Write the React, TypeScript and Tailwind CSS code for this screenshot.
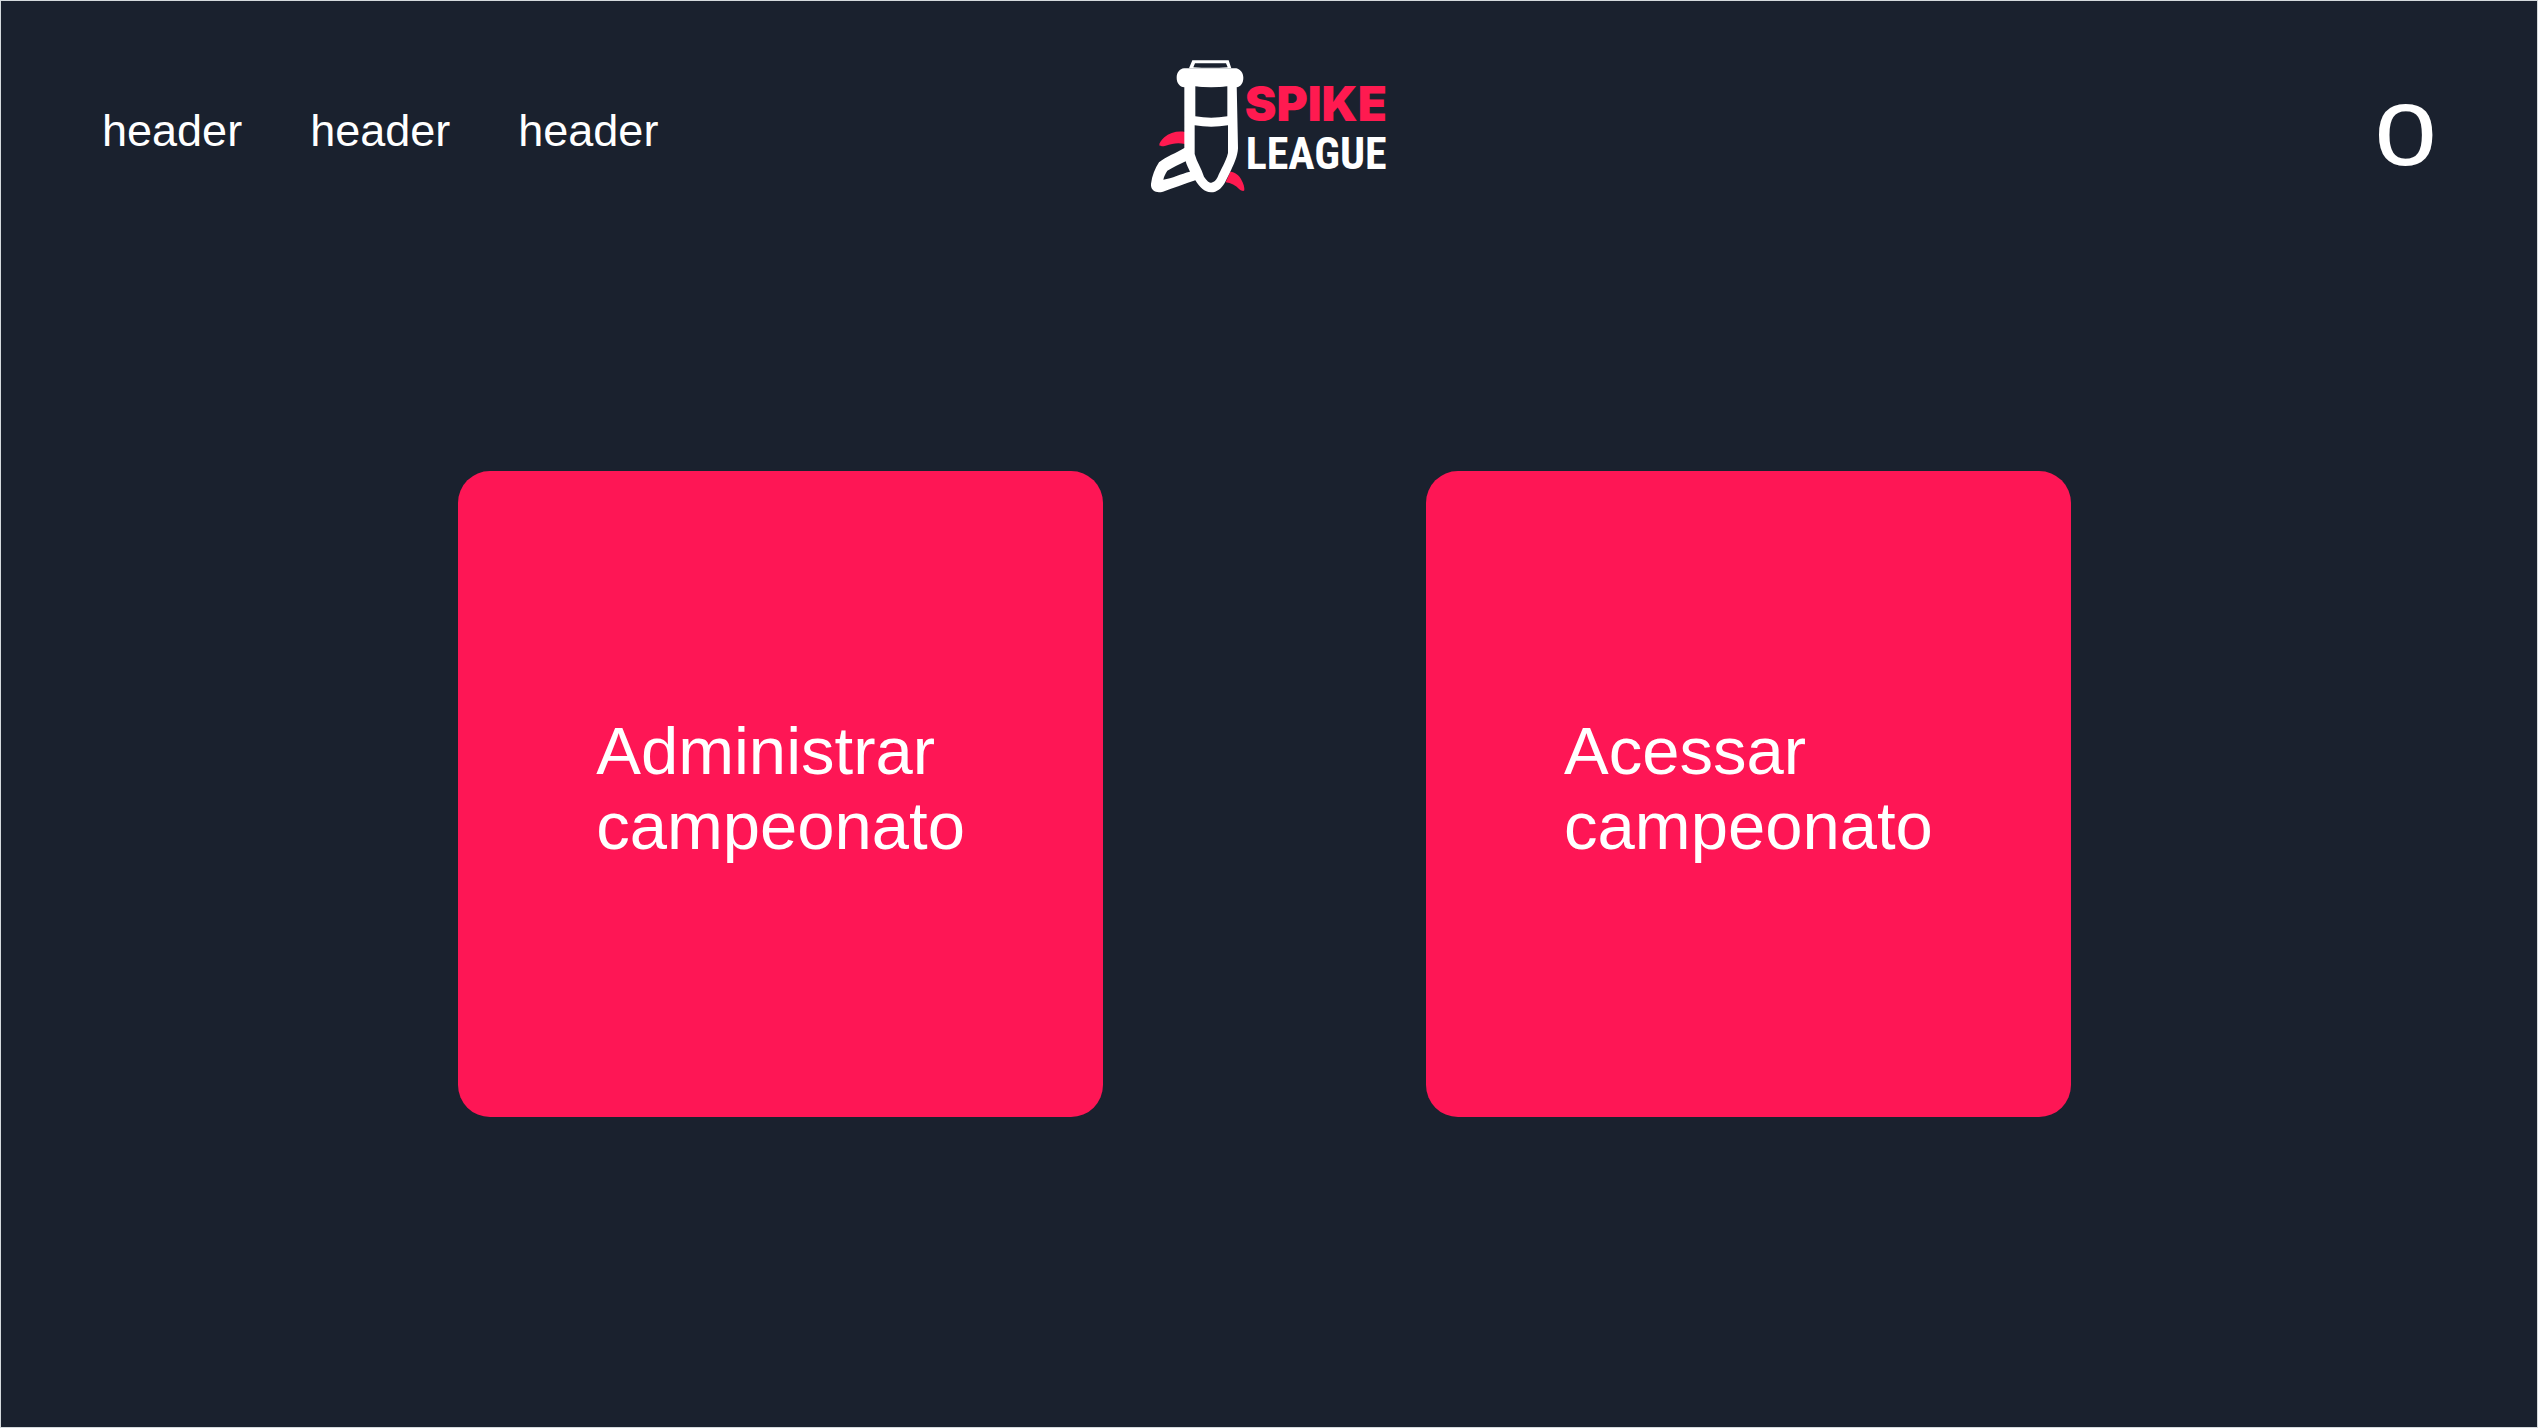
const links = [
  { id: 'first', label: 'header' },
  { id: 'second', label: 'header' },
  { id: 'third', label: 'header' },
];

const actions = [
  { id: 'manage', lines: ['Administrar', 'campeonato'] },
  { id: 'access', lines: ['Acessar', 'campeonato'] },
];

function Logo() {
  return (
    <svg viewBox="32 29 708 399" className="w-[236px] h-[133px]" role="img" aria-label="Spike League">
      {/* spikes behind the boot */}
      <g fill="#ff1a50">
        <path d="M134 245 C112 241 88 247 72 261 C62 270 56 279 57 285 C60 289 68 288 76 286 C96 279 114 276 134 281 Z" />
        <path d="M270 364 C284 365 296 374 303 388 C310 400 313 412 312 420 C310 424 303 422 297 417 C286 405 272 398 256 396 Z" />
      </g>
      <g fill="#fff">
        {/* pull tab and cuff */}
        <path
          fillRule="evenodd"
          d="M156 30 H265 L273 54 H146 Z M164 39 L159 51 Q210 54 262 51 L257 39 Z"
        />
        <path d="M131 54 H288 C300 57 309 68 309 82 C309 99 301 108 289 111 L261 108 Q212 114 164 108 L132 111 C118 109 109 98 109 82 C109 66 118 56 131 54 Z" />
        {/* shaft, foot and toe */}
        <path
          fillRule="evenodd"
          d="M132 100 H289 L293 294 C292 318 280 344 268 368 L253 398 C243 415 230 426 212 426 C192 426 178 410 165 390 C132 400 100 414 68 424 C46 430 30 420 32 400 C35 376 44 354 56 336 C78 318 108 308 132 293 Z
             M165 106 V198 Q212 206 261 198 V106 Q212 113 165 106 Z
             M163 225 V311 C170 336 183 354 191 379 C200 392 206 397 213 397 C221 396 227 390 232 380 C242 356 256 336 263 308 V225 Q212 233 163 225 Z
             M136 333 C118 342 98 351 81 361 C75 370 71 378 69 388 C96 384 122 370 149 364 C144 354 139 344 136 333 Z"
        />
      </g>
      <text x="313" y="211" fill="#ff1a50" fontFamily="Inter, sans-serif" fontWeight="900" fontSize="143">
        SPIKE
      </text>
      <text
        x="316"
        y="356"
        fill="#fff"
        fontFamily="'Liberation Sans Narrow', 'Roboto Condensed', 'Open Sans Condensed', 'Liberation Sans', sans-serif"
        fontWeight="700"
        fontSize="132"
      >
        LEAGUE
      </text>
    </svg>
  );
}

export default function App() {
  return (
    <div className="flex min-h-screen flex-col border border-[#d5dadd] bg-[#1a212e] font-['Liberation_Sans',Arial,sans-serif] text-white">
      <header className="grid grid-cols-[1fr_auto_1fr] items-center px-[100px] pt-[59px]">
        <nav className="flex gap-[68px] pt-2 pl-px text-[45px] leading-[50px]">
          {links.map((link) => (
            <a key={link.id} href={`#${link.id}`}>
              {link.label}
            </a>
          ))}
        </nav>
        <Logo />
        <div className="flex h-[133px] items-center justify-end">
          <button type="button" className="text-[113px] leading-[113px]">
            o
          </button>
        </div>
      </header>
      <main className="grid flex-1 grid-cols-2 items-center gap-[12.7vw] pt-8 pr-[18.35vw] pb-16 pl-[18vw]">
        {actions.map((action) => (
          <button
            key={action.id}
            type="button"
            className="flex aspect-square items-center justify-center rounded-[32px] bg-[#fe1655] pb-3 text-left text-[67px] leading-[75px]"
          >
            <span>
              {action.lines[0]}
              <br />
              {action.lines[1]}
            </span>
          </button>
        ))}
      </main>
    </div>
  );
}
